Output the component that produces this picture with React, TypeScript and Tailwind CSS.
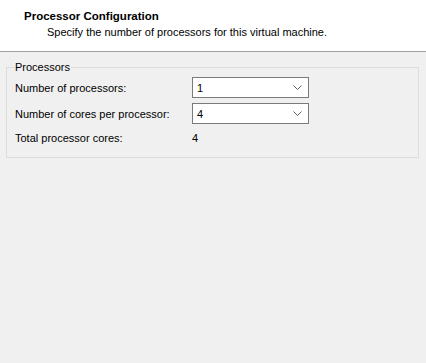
import React from "react";

const font = { fontFamily: '"Liberation Sans", Arial, sans-serif' };

function Chevron() {
  return (
    <svg width="9" height="5" viewBox="0 0 9 5" className="shrink-0">
      <path d="M0.5 0.5 L4.5 4.5 L8.5 0.5" fill="none" stroke="#606060" strokeWidth="1" />
    </svg>
  );
}

function Combo({ value }: { value: string }) {
  return (
    <div className="flex h-[21px] w-[117px] items-center justify-between border border-[#7a7a7a] bg-white pl-[4px] pr-[6px]">
      <span className="text-[11px] leading-[14px] text-black">{value}</span>
      <Chevron />
    </div>
  );
}

export default function App() {
  return (
    <div className="min-h-[363px] w-[426px] bg-[#f0f0f0] text-[11px] text-black" style={font}>
      {/* wizard header */}
      <div className="h-[52px] border-b border-[#a0a0a0] bg-white pt-[8px]">
        <div className="pl-[24px] text-[11.5px] font-bold leading-[16px]">Processor Configuration</div>
        <div className="pl-[47px] text-[11px] leading-[16px]">Specify the number of processors for this virtual machine.</div>
      </div>

      <fieldset className="ml-[6px] mt-[8px] w-[413px] border border-[#dcdcdc] px-[8px] pb-[11px]">
        <legend className="pr-[1px] text-[11px] leading-[14px]">Processors</legend>
        <div className="mt-[3px] flex flex-col gap-[5px]">
          <div className="flex items-center">
            <span className="w-[177px] leading-[14px]">Number of processors:</span>
            <Combo value="1" />
          </div>
          <div className="flex items-center">
            <span className="w-[177px] leading-[14px]">Number of cores per processor:</span>
            <Combo value="4" />
          </div>
          <div className="flex items-center pt-[1px]">
            <span className="w-[177px] leading-[16px]">Total processor cores:</span>
            <span className="leading-[16px]">4</span>
          </div>
        </div>
      </fieldset>
    </div>
  );
}
